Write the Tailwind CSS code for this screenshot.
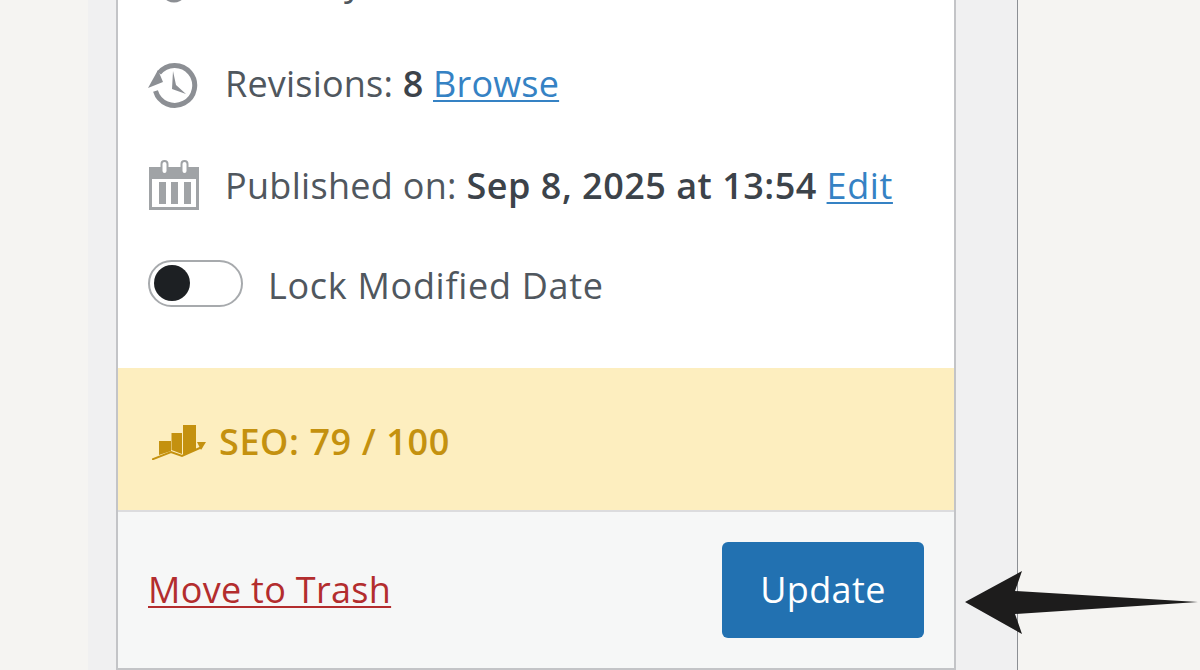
<!DOCTYPE html>
<html lang="en">
<head>
    <meta charset="utf-8"/>
    <title>Publish panel</title>
    <script src="https://cdn.jsdelivr.net/npm/@tailwindcss/browser@4"></script>
</head>
<body class="bg-[#f5f4f2] h-[670px] overflow-hidden relative font-['Open_Sans',sans-serif] text-[#50575e]">
    <div class="flex h-[670px] overflow-hidden">
        <div class="w-[88px] shrink-0"></div>
        <!-- Admin column -->
        <div class="w-[930px] shrink-0 bg-[#f0f0f1] pl-[28px] pr-[61px] border-r border-[#8c8f94]">
            <!-- Publish box -->
            <div class="h-[670px] border-x-2 border-b-2 border-[#c3c4c7] bg-white flex flex-col overflow-hidden">
                <div class="h-[437px] shrink-0 flex flex-col pl-[30px] -mt-[69px] text-[36px]">
                    <div class="h-[102px] shrink-0 flex items-center gap-[25px]">
                        <svg class="w-[52px] h-[52px] shrink-0" viewBox="0 0 52 52" fill="#8c8f94"><ellipse cx="26" cy="26" rx="16" ry="20.5"/></svg>
                        <span>Visibility: <b class="font-semibold text-[#3c434a]">Public</b></span>
                    </div>
                    <div class="h-[102px] shrink-0 flex items-center gap-[25px]">
                        <svg class="w-[52px] h-[52px] shrink-0" viewBox="0 0 52 52" fill="none">
                            <path d="M11 15 A20 20 0 1 1 7.5 33" stroke="#8c8f94" stroke-width="5"/>
                            <path d="M0 30 L10 12 L15 24 Z" fill="#8c8f94"/>
                            <path d="M25 13 L28 27 L38 36 L24 31 Z" fill="#8c8f94"/>
                        </svg>
                        <span class="tracking-[0.2px]">Revisions: <b class="font-semibold text-[#3c434a]">8</b> <a href="#" class="text-[#3582c4] underline underline-offset-[3px] decoration-2">Browse</a></span>
                    </div>
                    <div class="h-[102px] shrink-0 flex items-center gap-[25px]">
                        <svg class="w-[52px] h-[52px] shrink-0" viewBox="0 0 52 52" fill="none">
                            <path d="M1 7 H51 V50 H1 Z M4 19 V47 H48 V19 Z" fill="#a0a3a6" fill-rule="evenodd"/>
                            <rect x="13.5" y="1" width="6" height="13" rx="3" fill="#fff" stroke="#a0a3a6" stroke-width="2"/>
                            <rect x="33.5" y="1" width="6" height="13" rx="3" fill="#fff" stroke="#a0a3a6" stroke-width="2"/>
                            <path d="M11 22 H18 V44 H11 Z M23 22 H30 V44 H23 Z M36 22 H43 V44 H36 Z" fill="#a0a3a6"/>
                        </svg>
                        <span class="whitespace-nowrap tracking-[0.3px]">Published on: <b class="font-semibold text-[#3c434a] tracking-[0.5px]">Sep 8, 2025 at 13:54</b> <a href="#" class="text-[#3582c4] underline underline-offset-[3px] decoration-2 tracking-[0.6px]">Edit</a></span>
                    </div>
                    <div class="h-[98px] shrink-0 flex items-center gap-[25px]">
                        <span class="w-[95px] h-[47px] shrink-0 mb-[6px] rounded-full border-2 border-[#a7aaad] bg-white flex items-center pl-[4px]">
                            <span class="w-[36px] h-[36px] rounded-full bg-[#1d2023] block"></span>
                        </span>
                        <span class="tracking-[0.7px]">Lock Modified Date</span>
                    </div>
                </div>
                <!-- SEO score -->
                <div class="h-[142px] shrink-0 bg-[#fdeebf] flex items-center pl-[34px] gap-[13px] pt-[6px] text-[36px] font-semibold text-[#c4910f]">
                    <svg class="w-[54px] h-[36px] shrink-0" viewBox="0 0 54 36" fill="#c4910f">
                        <path d="M7 17 H19 V27 L7 31 Z M19.5 9 H30 V30 L19.5 26 Z M31 1 H44 V26 L31 31 Z"/>
                        <path d="M0 35.5 L19 28 L30 32 L50 23" fill="none" stroke="#c4910f" stroke-width="2"/>
                        <path d="M45 18 L54 18 L49 26 Z"/>
                    </svg>
                    <span class="tracking-[0.6px]">SEO: 79 / 100</span>
                </div>
                <!-- Footer actions -->
                <div class="flex-1 bg-[#f6f7f7] border-t-2 border-[#dcdcde] flex items-center justify-between pl-[30px] pr-[30px]">
                    <a href="#" class="text-[36px] tracking-[0.3px] text-[#b32d2e] underline underline-offset-[3px] decoration-2">Move to Trash</a>
                    <button class="w-[202px] h-[96px] rounded-[6px] bg-[#2271b1] text-white text-[36px] tracking-[0.4px]">Update</button>
                </div>
            </div>
        </div>
    </div>
    <!-- Arrow annotation -->
    <svg class="absolute left-[960px] top-[565px] w-[240px] h-[75px]" viewBox="0 0 240 75" fill="#1d1c1c">
        <path d="M5 37 L62 6 L55 26 L238 37 L55 49 L62 69 Z"/>
    </svg>
</body>
</html>
